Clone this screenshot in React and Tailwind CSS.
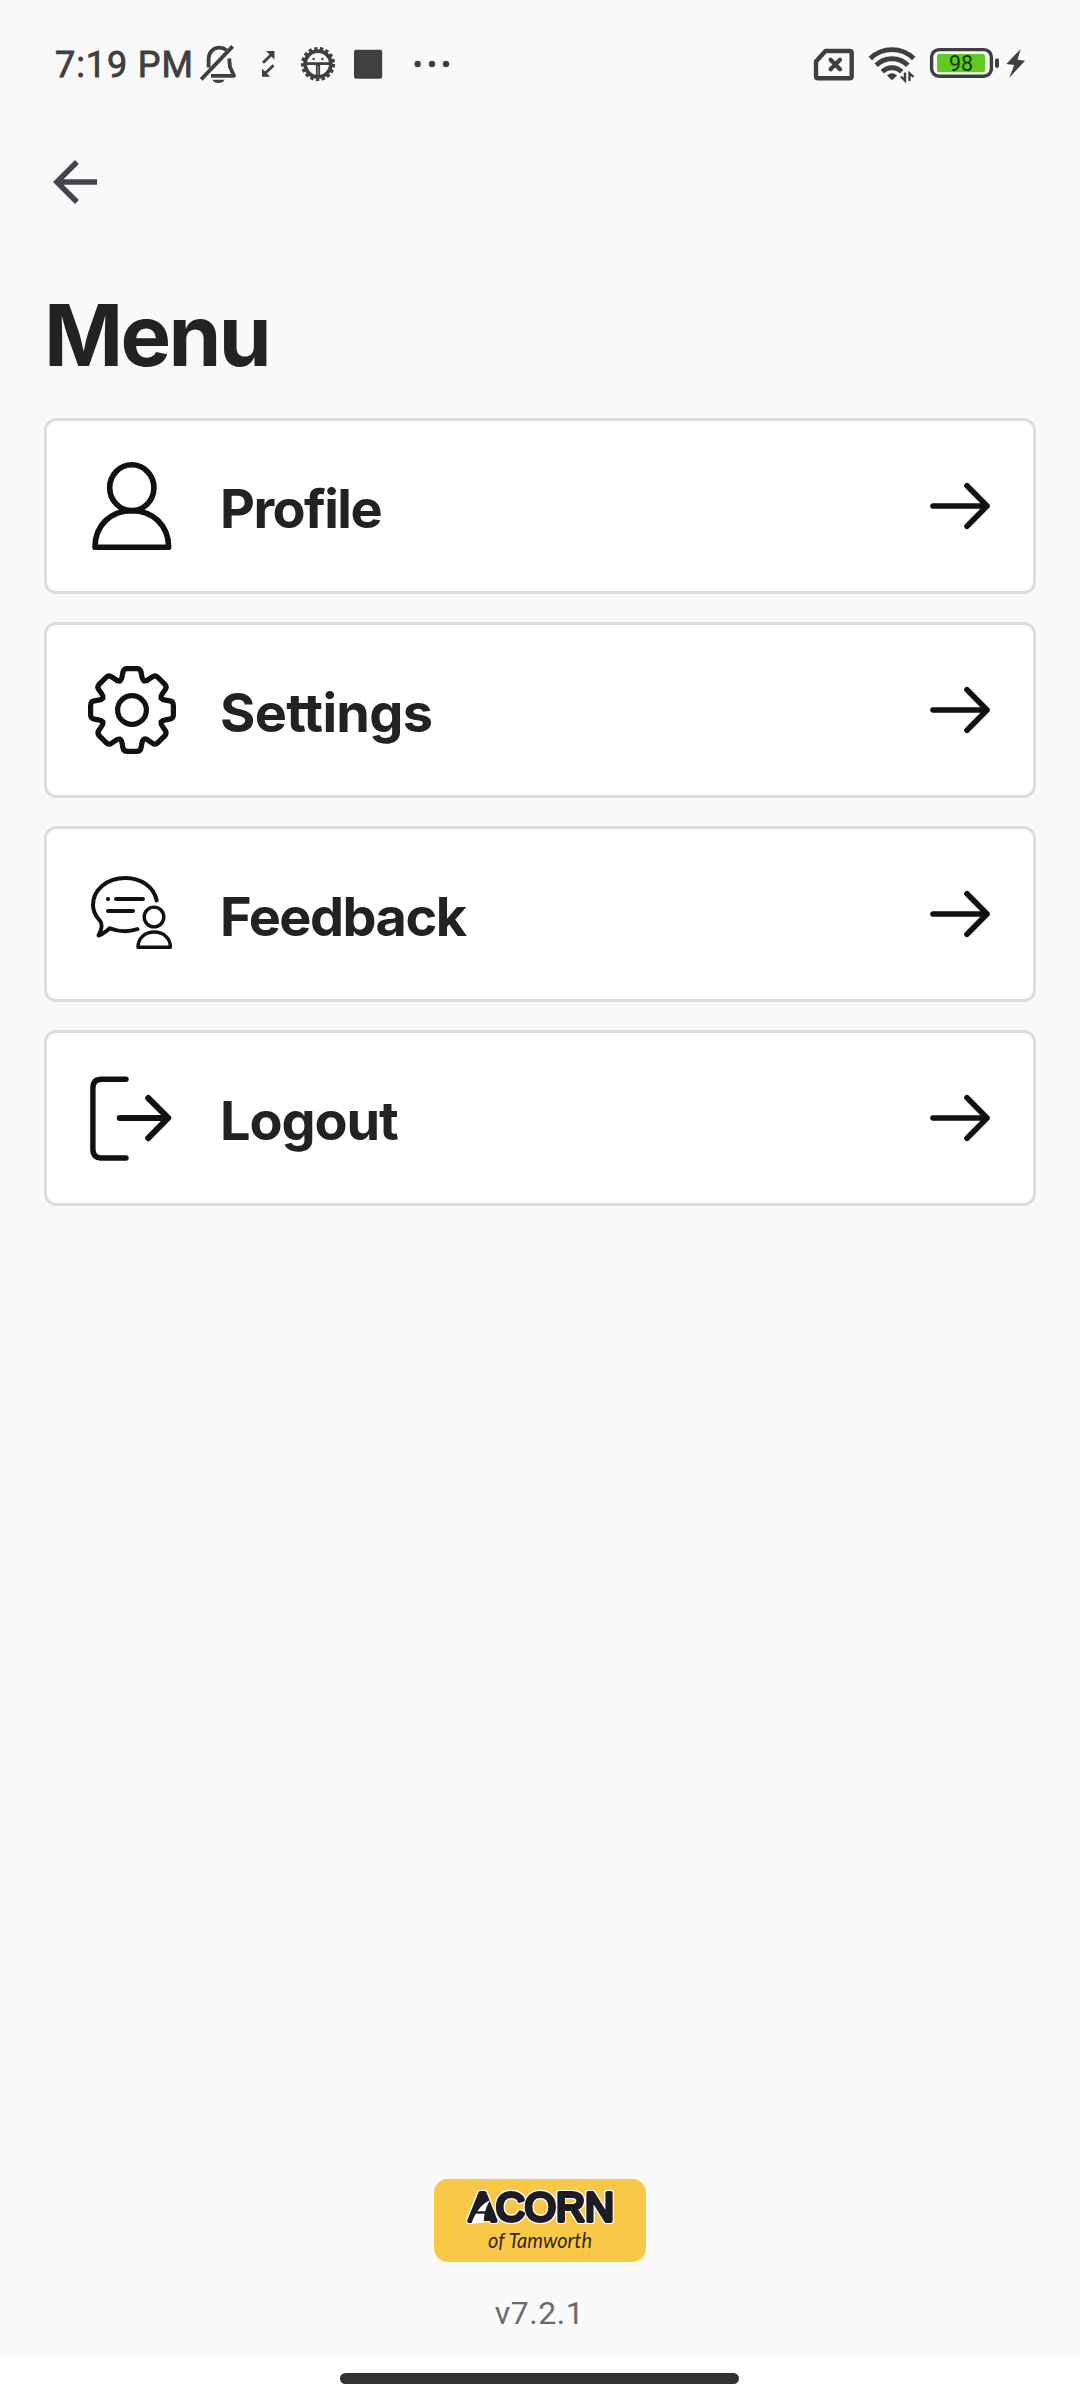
const INK = '#111111'
const STATUS = '#3f3f3f'

const MENU_ITEMS = [
  { label: 'Profile', Icon: ProfileIcon, tracking: 'tracking-[-1.6px]' },
  { label: 'Settings', Icon: GearIcon, tracking: 'tracking-[-0.7px]' },
  { label: 'Feedback', Icon: FeedbackIcon, tracking: 'tracking-[-1.5px]' },
  { label: 'Logout', Icon: LogoutIcon, tracking: 'tracking-[-1.1px]' },
]

export default function App() {
  return (
    <div className="flex h-[2400px] w-[1080px] flex-col bg-[#f9f9f9] font-['Inter',sans-serif]">
      <StatusBar />
      <header className="flex h-[116px] items-start pt-[21px] pl-[42px]">
        <button aria-label="Back" className="block">
          <svg width="66" height="66" viewBox="0 0 24 24" fill="#45434b">
            <path d="M20 11H7.83l5.59-5.59L12 4l-8 8 8 8 1.41-1.41L7.83 13H20v-2z" />
          </svg>
        </button>
      </header>
      <main className="flex flex-1 flex-col px-[44px]">
        <h1 className="h-[174px] pt-[40px] text-[85px] leading-[104px] font-bold tracking-[-2.7px] text-[#222222]">Menu</h1>
        <ul className="flex flex-col gap-7">
          {MENU_ITEMS.map((item) => <MenuRow key={item.label} {...item} />)}
        </ul>
      </main>
      <footer className="flex h-[177px] flex-col items-center">
        <Logo />
        <p className="mt-[30px] pr-[1px] font-['Roboto',sans-serif] text-[32px] leading-[42px] tracking-[0.5px] text-[#6b6b6b]">v7.2.1</p>
      </footer>
      <div className="flex h-11 justify-center bg-white pt-[17px] pr-[2px]">
        <div className="h-[11px] w-[399px] rounded-full bg-[#333333]" />
      </div>
    </div>
  )
}

function MenuRow({ label, Icon, tracking }) {
  return (
    <li className="flex h-[176px] items-center rounded-[12px] border-3 border-[#dddddd] bg-white px-[41px]">
      <Icon />
      <span className={`ml-[44px] flex-1 pt-[6px] text-[54px] leading-[66px] font-bold text-[#222222] ${tracking}`}>{label}</span>
      <svg width="66" height="66" viewBox="0 0 66 66" fill="none" stroke={INK} strokeWidth="5.6" strokeLinecap="round" strokeLinejoin="round">
        <path d="M7 33H61M41 12.7 61 33 41 53.3" />
      </svg>
    </li>
  )
}

function StatusBar() {
  return (
    <div className="flex h-[128px] shrink-0 items-start justify-between pr-[52px] pl-[55px] font-['Roboto',sans-serif]">
      <div className="flex items-center pt-[40px]">
        <span className="w-[145px] pt-px text-[36px] leading-[48px] tracking-[0.9px] whitespace-nowrap text-[#3f3f3f] [-webkit-text-stroke:0.8px_#3f3f3f]">7:19 PM</span>
        <svg width="260" height="48" viewBox="200 40 260 48" fill="none" stroke={STATUS}>
          {/* muted bell */}
          <g strokeWidth="3.8" strokeLinejoin="round">
            <path d="M208.6 66.5V58c0-7 5-11.3 10.6-11.3 3 0 5.2.8 7.2 2.3" />
            <path d="M229.2 57.5 230 66l4 8.8H211" />
            <path d="M202.5 77 231.3 46.7" strokeLinecap="square" />
          </g>
          <path d="M212.5 78.8h12c-1.6 4.4-10.4 4.4-12 0z" fill={STATUS} stroke="none" />
          {/* transfer arrows */}
          <path d="M263 61.7 271 54M273.5 64.3 265.5 72" strokeWidth="2.8" />
          <path d="M266 50h8.4v8.4zM262 67.5v8.3h8.3z" fill={STATUS} stroke="none" />
          {/* toothed badge */}
          <circle cx="318" cy="63" r="12.9" strokeWidth="3.8" />
          <circle cx="318" cy="63" r="15.6" strokeWidth="3" strokeDasharray="3.4 2.365" />
          <path d="M305 62.6h26" strokeWidth="2.8" />
          <path d="M318 63v14" strokeWidth="4.2" />
          <path d="M318 65v9" stroke="#999999" strokeWidth="1" />
          <circle cx="313.6" cy="58" r="1.2" fill={STATUS} stroke="none" />
          <circle cx="322.4" cy="58" r="1.2" fill={STATUS} stroke="none" />
          <rect x="354" y="48.7" width="28.2" height="29" rx="2" fill={STATUS} stroke="none" />
          <g fill={STATUS} stroke="none">
            <circle cx="417.7" cy="63" r="3.2" />
            <circle cx="432" cy="63" r="3.2" />
            <circle cx="446" cy="63" r="3.2" />
          </g>
        </svg>
      </div>
      <svg className="mt-[40px]" width="216" height="48" viewBox="812 40 216 48" fill="none" stroke={STATUS}>
        {/* no SIM */}
        <path d="M825.5 51H849.7q2 0 2 2V76.3q0 2-2 2H818q-2 0-2-2V61.5z" strokeWidth="4.4" strokeLinejoin="round" />
        <path d="M830.6 59.8 840 69.2M840 59.8 830.6 69.2" strokeWidth="4.2" strokeLinecap="round" />
        {/* wifi */}
        <g strokeWidth="4.9">
          <path d="M870.3 58.5a31 31 0 0 1 43.4 0" />
          <path d="M876.2 65.2a22.5 22.5 0 0 1 31.6 0" />
          <path d="M882.3 71.8a13.8 13.8 0 0 1 19.4 0" />
        </g>
        <path d="M887 75.5q5-4.6 10 0L892 80.3z" fill={STATUS} stroke="none" />
        <path d="M905 72.5V80.5L901 76.5M909.5 81V73.2L913.5 77" strokeWidth="2.4" />
        {/* battery */}
        <rect x="931.6" y="49.6" width="59.8" height="26.6" rx="7.5" strokeWidth="3.4" />
        <rect x="937" y="54" width="48" height="18.2" rx="2" fill="#62c91f" stroke="none" />
        <text x="961" y="71.2" textAnchor="middle" fontSize="21.5" fill="#0d3a05" stroke="none">98</text>
        <rect x="995" y="58.3" width="4" height="9.6" rx="2" fill={STATUS} stroke="none" />
        <path d="M1020.7 49 1006.3 64l8 1L1009.3 77.7 1025 60.7l-7.5-1z" fill={STATUS} stroke="none" />
      </svg>
    </div>
  )
}

function ProfileIcon() {
  return (
    <svg width="88" height="88" viewBox="0 0 88 88" fill="none" stroke={INK} strokeWidth="5.6" strokeLinejoin="round">
      <ellipse cx="43.8" cy="25.7" rx="22.1" ry="22.9" />
      <path d="M7 85.2C7 63 23 48.7 43.8 48.7S80.6 63 80.6 85.2z" />
    </svg>
  )
}

// One tooth centred on the vertical axis; eight of them close the ring.
function gearPath() {
  const at = (x, y, deg) => {
    const a = (deg * Math.PI) / 180
    return `${(44 + x * Math.cos(a) - y * Math.sin(a)).toFixed(2)} ${(44 + x * Math.sin(a) + y * Math.cos(a)).toFixed(2)}`
  }
  let d = ''
  for (let i = 0; i < 8; i++) {
    const r = i * 45
    d += `${i ? 'L' : 'M'}${at(-9.9, -33.4, r)}L${at(-9.1, -37.8, r)}Q${at(-8.5, -41.4, r)} ${at(-4.8, -41.4, r)}`
    d += `L${at(4.8, -41.4, r)}Q${at(8.5, -41.4, r)} ${at(9.1, -37.8, r)}L${at(9.9, -33.4, r)}`
    d += `Q${at(10.2, -30.5, r)} ${at(12, -29, r)}Q${at(14.35, -28.78, r)} ${at(-9.9, -33.4, r + 45)}`
  }
  return d + 'Z'
}

function GearIcon() {
  return (
    <svg width="88" height="88" viewBox="0 0 88 88" fill="none" stroke={INK} strokeWidth="5.2" strokeLinejoin="round">
      <path d={gearPath()} />
      <circle cx="44" cy="44" r="14.4" />
    </svg>
  )
}

function FeedbackIcon() {
  return (
    <svg width="88" height="88" viewBox="0 0 88 88" fill="none" stroke={INK} strokeWidth="4" strokeLinecap="round" strokeLinejoin="round">
      <path d="M68.7 30.5C66 17 53 8 37.5 8 19 8 5 19.5 5 35c0 7 3.5 12 6.8 15.5C15.5 54.5 13.5 60 10.5 65.500 16 64 18.5 60.5 22 58.3c8 3.2 18 3.7 27.5.9" />
      <path d="M19.9 29h.2M28 29h27M20 41h25" />
      <g strokeWidth="3.4">
        <ellipse cx="66" cy="47" rx="9.8" ry="9.9" />
        <path d="M50 77.2C50 68 57 62 66.2 62s16.2 6 16.2 15.2z" />
      </g>
    </svg>
  )
}

function LogoutIcon() {
  return (
    <svg width="88" height="88" viewBox="0 0 88 88" fill="none" stroke={INK} strokeWidth="5.4" strokeLinecap="round" strokeLinejoin="round">
      <path d="M38 5.2H13.5Q4.9 5.2 4.9 14V75Q4.9 84 13.5 84H38" />
      <path d="M31.7 43.9H80M60.2 24 80.2 43.9 60.2 64.2" strokeWidth="6" />
    </svg>
  )
}

function Logo() {
  return (
    <svg className="block" width="212" height="83" viewBox="434 2179 212 83">
      <rect x="434" y="2179" width="212" height="83" rx="14" fill="#f9c846" />
      <g className="[filter:drop-shadow(1px_0_0_#fff)_drop-shadow(-1px_0_0_#fff)_drop-shadow(0_1px_0_#fff)_drop-shadow(0_-1px_0_#fff)]">
        <text x="469" y="2221" textLength="145" lengthAdjust="spacingAndGlyphs" fontFamily="Liberation Sans, Arial, sans-serif" fontSize="41" strokeLinejoin="round" fill="#1e1c22" stroke="#1e1c22" strokeWidth="4">ACORN</text>
        <path d="M483.5 2196 495 2221H474z" fill="#1e1c22" />
      </g>
      {/* road running through the first letter */}
      <path d="M490 2200C482 2204 476 2211 471.5 2223H484C483.5 2215 485.5 2208 490 2200z" fill="#ffffff" />
      <path d="M476 2212.5H489" stroke="#1e1c22" strokeWidth="2.4" />
      <text x="488" y="2247.5" textLength="104" lengthAdjust="spacingAndGlyphs" fontFamily="Lato, sans-serif" fontStyle="italic" fontSize="22" fill="#33290f">of Tamworth</text>
    </svg>
  )
}
